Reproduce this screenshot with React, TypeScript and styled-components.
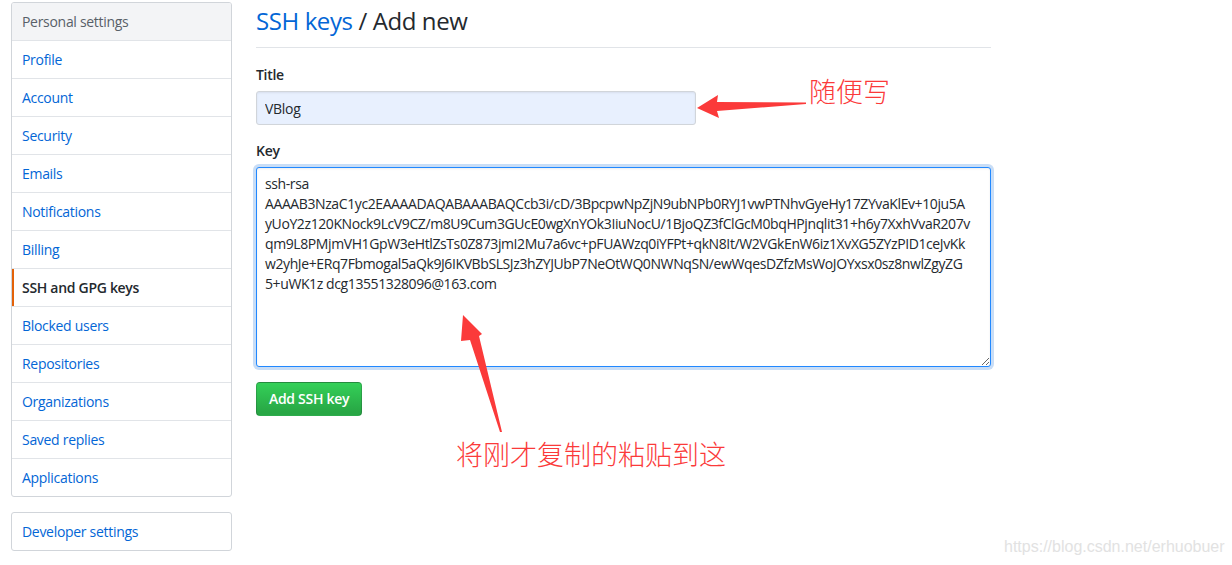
import styled, { createGlobalStyle } from 'styled-components';

const GlobalStyle = createGlobalStyle`
  html, body {
    margin: 0;
    padding: 0;
    background: #fff;
  }
  body {
    font-family: "Segoe UI", "Open Sans", "Noto Sans", "Liberation Sans", sans-serif;
    font-size: 14px;
    line-height: 20px;
    letter-spacing: -0.3px;
    color: #24292e;
  }
  * {
    box-sizing: border-box;
  }
`;

const menuItems = [
  'Profile',
  'Account',
  'Security',
  'Emails',
  'Notifications',
  'Billing',
  'SSH and GPG keys',
  'Blocked users',
  'Repositories',
  'Organizations',
  'Saved replies',
  'Applications',
];

const keyText = [
  'ssh-rsa',
  'AAAAB3NzaC1yc2EAAAADAQABAAABAQCcb3i/cD/3BpcpwNpZjN9ubNPb0RYJ1vwPTNhvGyeHy17ZYvaKlEv+10ju5A',
  'yUoY2z120KNock9LcV9CZ/m8U9Cum3GUcE0wgXnYOk3IiuNocU/1BjoQZ3fClGcM0bqHPjnqlit31+h6y7XxhVvaR207v',
  'qm9L8PMjmVH1GpW3eHtlZsTs0Z873jmI2Mu7a6vc+pFUAWzq0iYFPt+qkN8It/W2VGkEnW6iz1XvXG5ZYzPID1ceJvKk',
  'w2yhJe+ERq7Fbmogal5aQk9J6IKVBbSLSJz3hZYJUbP7NeOtWQ0NWNqSN/ewWqesDZfzMsWoJOYxsx0sz8nwlZgyZG',
  '5+uWK1z dcg13551328096@163.com',
].join('\n');

export default function App(): JSX.Element {
  return (
    <Page>
      <GlobalStyle />

      <Sidebar>
        <Menu>
          <MenuHeading>Personal settings</MenuHeading>
          {menuItems.map((item) => (
            <MenuItem key={item} href="#" $selected={item === 'SSH and GPG keys'}>
              {item}
            </MenuItem>
          ))}
        </Menu>

        <Menu>
          <MenuItem href="#" $selected={false}>Developer settings</MenuItem>
        </Menu>
      </Sidebar>

      <Main>
        <Subhead>
          <SubheadLink href="#">SSH keys</SubheadLink> / Add new
        </Subhead>

        <FormGroup>
          <Label>Title</Label>
          <TitleInput defaultValue="VBlog" />
        </FormGroup>

        <FormGroup>
          <Label>Key</Label>
          <KeyArea defaultValue={keyText} spellCheck={false} />
        </FormGroup>

        <PrimaryButton type="button">Add SSH key</PrimaryButton>
      </Main>

      {/* annotations drawn on top of the screenshot */}
      <ArrowLayer width="1232" height="565" viewBox="0 0 1232 565">
        <polygon
          points="697,108 718,95 717,102 806,102.5 806,104 717,111 719,118"
          fill="#fb3a3a"
        />
        <polygon
          points="463,315 482,334 479,336 502,432 500,432 470,340 461,341"
          fill="#fb3a3a"
        />
      </ArrowLayer>
      <Note $left={809} $top={73}>随便写</Note>
      <Note $left={456} $top={436}>将刚才复制的粘贴到这</Note>

      <Watermark>https://blog.csdn.net/erhuobuer</Watermark>
    </Page>
  );
}

const Page = styled.div`
  position: relative;
  width: 1232px;
  height: 565px;
  overflow: hidden;

  display: flex;
  align-items: flex-start;
  gap: 24px;
  padding: 2px 0 0 11px;
  background: #fff;
`;

const Sidebar = styled.nav`
  width: 221px;
  flex-shrink: 0;

  display: flex;
  flex-direction: column;
  gap: 15px;
`;

const Menu = styled.div`
  display: flex;
  flex-direction: column;
  border: 1px solid #d1d5da;
  border-radius: 3px;
  overflow: hidden;

  & > a:last-child {
    border-bottom: none;
  }
`;

const MenuHeading = styled.div`
  padding: 8px 10px;
  line-height: 21px;
  color: #586069;
  background: #f3f4f6;
  border-bottom: 1px solid #e1e4e8;
`;

const MenuItem = styled.a<{ $selected: boolean }>`
  position: relative;
  display: block;
  padding: 8px 10px;
  line-height: 21px;
  border-bottom: 1px solid #e1e4e8;
  text-decoration: none;
  color: ${(props) => (props.$selected ? '#24292e' : '#0366d6')};
  font-weight: ${(props) => (props.$selected ? 600 : 400)};

  &::before {
    content: "";
    display: ${(props) => (props.$selected ? 'block' : 'none')};
    position: absolute;
    top: 0;
    bottom: 0;
    left: 0;
    width: 2px;
    background: #e36209;
  }
`;

const Main = styled.main`
  width: 735px;
  display: flex;
  flex-direction: column;
  align-items: flex-start;
`;

const Subhead = styled.h2`
  width: 100%;
  margin: 0 0 17px;
  padding-bottom: 8px;
  border-bottom: 1px solid #e1e4e8;
  font-size: 24px;
  line-height: 37px;
  font-weight: 400;
  letter-spacing: -0.4px;
  color: #24292e;
`;

const SubheadLink = styled.a`
  color: #0366d6;
  text-decoration: none;
`;

const FormGroup = styled.div`
  width: 100%;
  display: flex;
  flex-direction: column;
  align-items: flex-start;
  gap: 6px;
  margin-bottom: 16px;
`;

const Label = styled.label`
  font-weight: 600;
  line-height: 20px;
`;

const TitleInput = styled.input`
  width: 440px;
  height: 34px;
  padding: 6px 8px;
  font: inherit;
  letter-spacing: inherit;
  color: #24292e;
  background: #e8f0fe;
  border: 1px solid #d1d5da;
  border-radius: 3px;
  box-shadow: inset 0 1px 2px rgba(27, 31, 35, 0.075);
  outline: none;
`;

const KeyArea = styled.textarea`
  width: 100%;
  height: 200px;
  padding: 6px 8px;
  font: inherit;
  line-height: 20px;
  letter-spacing: -0.4px;
  color: #24292e;
  background: #fff;
  border: 1px solid #2188ff;
  border-radius: 3px;
  box-shadow: inset 0 1px 2px rgba(27, 31, 35, 0.075), 0 0 0 3px rgba(3, 102, 214, 0.22);
  outline: none;
  resize: vertical;
  overflow: hidden;
`;

const PrimaryButton = styled.button`
  margin-top: -1px;
  height: 34px;
  padding: 6px 12px;
  font: inherit;
  font-weight: 600;
  letter-spacing: -0.3px;
  color: #fff;
  background-color: #28a745;
  background-image: linear-gradient(-180deg, #34d058 0%, #28a745 90%);
  border: 1px solid rgba(27, 31, 35, 0.2);
  border-radius: 4px;
`;

const ArrowLayer = styled.svg`
  position: absolute;
  top: 0;
  left: 0;
  pointer-events: none;
`;

const Note = styled.span<{ $left: number; $top: number }>`
  position: absolute;
  left: ${(props) => props.$left}px;
  top: ${(props) => props.$top}px;
  font-family: "Noto Sans CJK SC", sans-serif;
  font-size: 27px;
  line-height: 36px;
  font-weight: 300;
  letter-spacing: 0;
  color: #fb3a3a;
  white-space: nowrap;
`;

const Watermark = styled.span`
  position: absolute;
  left: 1004px;
  top: 537px;
  font-family: "Liberation Sans", Arial, sans-serif;
  font-size: 16px;
  line-height: 20px;
  letter-spacing: 0;
  color: #e2e2e2;
`;
